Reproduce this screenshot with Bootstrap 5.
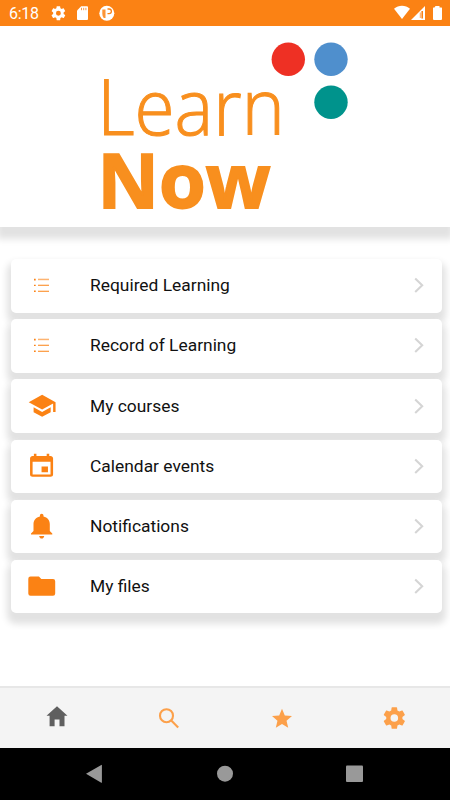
<!DOCTYPE html>
<html lang="en">
<head>
<meta charset="utf-8">
<meta name="viewport" content="width=device-width, initial-scale=1">
<title>Learn Now</title>
<link href="https://cdn.jsdelivr.net/npm/bootstrap@5.3.0/dist/css/bootstrap.min.css" rel="stylesheet">
<style>
  body { font-family: Roboto, "Liberation Sans", sans-serif; height: 800px; overflow: hidden; }
  svg { display: block; flex: none; }
  .status-bar { height: 26px; background: #fb8214; font-size: 16px; padding: 2px 8px 0 9px; }
  .status-bar .time { width: 42px; line-height: 24px; letter-spacing: -.3px; }
  .brand { height: 201px; box-shadow: 0 9px 7px 3px #e2e2e2; }
  .brand svg { overflow: visible; }
  .menu { padding: 32px 8px 0 11px; gap: 6.7px; }
  .menu-row { height: 53.5px; border-radius: 5px; box-shadow: 0 7px 7px 4px #e2e2e2; color: #111; font-size: 17.4px; padding: 0 16px 1px; text-decoration: none; }
  .menu-row:hover { color: #111; }
  .menu-row .label { margin-left: 33px; }
  .tabs { height: 62px; background: #f4f4f4; border-top: 2px solid #e7e7e7; padding: 0 0 1px 1px; }
  .tabs a { color: #fca04a; }
  .tabs a.current { color: #5f5f5f; }
  .nav-keys { height: 52px; background: #000; }
</style>
<script src="https://cdn.jsdelivr.net/npm/bootstrap@5.3.0/dist/js/bootstrap.bundle.min.js"></script>
</head>
<body class="d-flex flex-column bg-white">
<header class="status-bar d-flex align-items-center text-white flex-shrink-0 position-relative">
  <span class="time">6:18</span>
  <svg width="96" height="24" viewBox="51 2 96 24" fill="#fff">
    <path transform="translate(50 4.8) scale(.7)" d="M19.430 12.980c.04-.32.07-.64.07-.98s-.03-.66-.07-.98l2.110-1.650c.19-.15.24-.42.12-.64l-2-3.460c-.12-.22-.39-.3-.61-.22l-2.490 1c-.52-.4-1.080-.73-1.690-.98l-.38-2.650C14.460 2.180 14.250 2 14 2h-4c-.25 0-.46.18-.49.42l-.38 2.650c-.61.25-1.170.59-1.690.98l-2.490-1c-.23-.09-.49 0-.61.22l-2 3.460c-.13.22-.07.49.12.64l2.110 1.650c-.04.32-.07.65-.07.98s.03.66.07.98l-2.110 1.650c-.19.15-.24.42-.12.64l2 3.460c.12.22.39.3.61.22l2.490-1c.52.4 1.080.73 1.690.98l.38 2.650c.03.24.24.42.49.42h4c.25 0 .46-.18.49-.42l.38-2.650c.61-.25 1.170-.59 1.690-.98l2.490 1c.23.09.49 0 .61-.22l2-3.460c.12-.22.07-.49-.12-.64l-2.110-1.650zM12 15.500a3.500 3.500 0 1 1 0-7 3.500 3.500 0 0 1 0 7z"/>
    <path d="M81.200 6.200H87q1 0 1 1V19q0 1-1 1h-9q-1 0-1-1v-8.600z"/>
    <path d="M81.500 7.800v2.400M83.700 7.800v2.400M85.900 7.800v2.400" stroke="#fb8214" stroke-width=".8"/>
    <circle cx="106.800" cy="13.300" r="7.500"/>
    <path d="M102.300 9.500h3.200v8.500h-1.800q-1.400-2-1.400-4z" fill="#fb8214" opacity=".85"/>
    <path d="M107.500 9h1.600a2.300 2.300 0 0 1 0 4.600h-1.600" fill="none" stroke="#fb8214" stroke-width="1.300"/>
  </svg>
  <svg class="ms-auto" width="51" height="24" viewBox="391 2 51 24" fill="#fff">
    <path d="M394 8.800c4.500-4 11.500-4 16 0L402 19z"/>
    <path d="M425 6v14h-14z"/><path d="M422.200 11v7.500" stroke="#fb8214" stroke-width="1.600"/><path d="M420.300 12.500v5.500" stroke="#fb8214" stroke-width=".7"/>
    <path d="M435.500 6h4v1.500h2q.5 0 .5.500v11q0 1-1 1h-7q-1 0-1-1V8q0-.5.500-.5h1z"/>
  </svg>
</header>

<section class="brand flex-shrink-0">
  <svg width="450" height="200" viewBox="0 26 450 200" fill="#f88f1e">
    <text x="97.200" y="135" font-family="Open Sans" font-weight="300" font-size="76.500" textLength="187.500" lengthAdjust="spacingAndGlyphs" stroke="#f88f1e" stroke-width="1.100">Learn</text>
    <text x="97.500" y="208.300" font-family="Open Sans" font-weight="700" font-size="75.500" textLength="173" lengthAdjust="spacingAndGlyphs" stroke="#f88f1e" stroke-width="1.800">Now</text>
    <circle cx="288.300" cy="59.300" r="16.700" fill="#ee3024"/>
    <circle cx="331" cy="59.300" r="16.700" fill="#4f8fcd"/>
    <circle cx="331" cy="102.200" r="16.700" fill="#00938c"/>
  </svg>
</section>

<main class="menu d-flex flex-column flex-grow-1">
  <a href="#" class="menu-row d-flex align-items-center bg-white">
    <svg width="30" height="30" fill="#fb8214"><path d="M7 8.700h1.700v1.700H7zM7 14.700h1.700v1.400H7zM7 20.500h1.700v1.500H7zM11 14.800h11v1H11zM11 20.800h11v1H11z"/><path d="M11 8.700h11v1.500H11z" opacity=".6"/></svg>
    <span class="label">Required Learning</span>
    <svg class="ms-auto" width="14" height="20" fill="none" stroke="#d5d5d5" stroke-width="2.100"><path d="M3.200 3.500l7 6.800-7 6.800"/></svg>
  </a>
  <a href="#" class="menu-row d-flex align-items-center bg-white">
    <svg width="30" height="30" fill="#fb8214"><path d="M7 8.700h1.700v1.700H7zM7 14.700h1.700v1.400H7zM7 20.500h1.700v1.500H7zM11 14.800h11v1H11zM11 20.800h11v1H11z"/><path d="M11 8.700h11v1.500H11z" opacity=".6"/></svg>
    <span class="label">Record of Learning</span>
    <svg class="ms-auto" width="14" height="20" fill="none" stroke="#d5d5d5" stroke-width="2.100"><path d="M3.200 3.500l7 6.800-7 6.800"/></svg>
  </a>
  <a href="#" class="menu-row d-flex align-items-center bg-white">
    <svg width="30" height="30" fill="#fb8214"><path transform="translate(.5 .2) scale(1.220)" d="M5 13.180v4L12 21l7-3.820v-4L12 17l-7-3.820zM12 3L1 9l11 6 9-4.910V17h2V9L12 3z"/></svg>
    <span class="label">My courses</span>
    <svg class="ms-auto" width="14" height="20" fill="none" stroke="#d5d5d5" stroke-width="2.100"><path d="M3.200 3.500l7 6.800-7 6.800"/></svg>
  </a>
  <a href="#" class="menu-row d-flex align-items-center bg-white">
    <svg width="30" height="30" fill="#fb8214"><path transform="translate(-.8 1.600) scale(1.280 1.150)" d="M17 12h-5v5h5v-5zM16 1v2H8V1H6v2H5c-1.110 0-1.990.9-1.990 2L3 19c0 1.100.89 2 2 2h14c1.100 0 2-.9 2-2V5c0-1.100-.9-2-2-2h-1V1h-2zm3 18H5V8h14v11z"/></svg>
    <span class="label">Calendar events</span>
    <svg class="ms-auto" width="14" height="20" fill="none" stroke="#d5d5d5" stroke-width="2.100"><path d="M3.200 3.500l7 6.800-7 6.800"/></svg>
  </a>
  <a href="#" class="menu-row d-flex align-items-center bg-white">
    <svg width="30" height="30" fill="#fb8214"><path d="M14.700 2.700c1.100 0 1.800.8 1.800 2v.8c4 .8 6.300 3.800 6.300 7.800v6.600l2.500 2.600v1.100H4V22.500l2.500-2.600v-6.600c0-4 2.400-7 6.400-7.800v-.8c0-1.200.7-2 1.800-2zM12.200 25h5c-.1 1.500-1.100 2.600-2.500 2.600S12.300 26.500 12.200 25z"/></svg>
    <span class="label">Notifications</span>
    <svg class="ms-auto" width="14" height="20" fill="none" stroke="#d5d5d5" stroke-width="2.100"><path d="M3.200 3.500l7 6.800-7 6.800"/></svg>
  </a>
  <a href="#" class="menu-row d-flex align-items-center bg-white">
    <svg width="30" height="30" fill="#fb8214"><path d="M3.500 5.500h8.400l2.400 2.600H26q2.200 0 2.200 2.200v12.200q0 2.200-2.200 2.200H3.500q-2.200 0-2.200-2.200V7.700q0-2.200 2.200-2.200z"/></svg>
    <span class="label">My files</span>
    <svg class="ms-auto" width="14" height="20" fill="none" stroke="#d5d5d5" stroke-width="2.100"><path d="M3.200 3.500l7 6.800-7 6.800"/></svg>
  </a>
</main>

<nav class="tabs row g-0 flex-shrink-0">
  <a href="#" class="col current d-flex justify-content-center align-items-center" aria-label="Home">
    <svg width="24" height="24" fill="currentColor"><path d="M12 .2l10.500 9.600h-3V20.200h-5V13.500H9.600v6.700H4.600V9.800H1.500z"/></svg></a>
  <a href="#" class="col d-flex justify-content-center align-items-center" aria-label="Search">
    <svg width="24" height="24" fill="none" stroke="currentColor" stroke-width="2.100"><circle cx="9.500" cy="9.700" r="6.500"/><path d="M14 14.200l7.200 7.200"/></svg></a>
  <a href="#" class="col d-flex justify-content-center align-items-center" aria-label="Favourites">
    <svg width="24" height="24" viewBox="0 -.8 24 24" fill="currentColor"><path d="M12 17.270L18.180 21l-1.640-7.030L22 9.240l-7.190-.61L12 2 9.190 8.630 2 9.240l5.460 4.730L5.820 21z"/></svg></a>
  <a href="#" class="col d-flex justify-content-center align-items-center" aria-label="Settings">
    <svg width="26" height="26" viewBox="-.3 0 24 24" fill="currentColor"><path d="M19.430 12.980c.04-.32.07-.64.07-.98s-.03-.66-.07-.98l2.110-1.650c.19-.15.24-.42.12-.64l-2-3.460c-.12-.22-.39-.3-.61-.22l-2.490 1c-.52-.4-1.080-.73-1.690-.98l-.38-2.650C14.460 2.180 14.250 2 14 2h-4c-.25 0-.46.18-.49.42l-.38 2.650c-.61.25-1.170.59-1.690.98l-2.490-1c-.23-.09-.49 0-.61.22l-2 3.460c-.13.22-.07.49.12.64l2.110 1.650c-.04.32-.07.65-.07.98s.03.66.07.98l-2.110 1.650c-.19.15-.24.42-.12.64l2 3.460c.12.22.39.3.61.22l2.490-1c.52.4 1.080.73 1.690.98l.38 2.650c.03.24.24.42.49.42h4c.25 0 .46-.18.49-.42l.38-2.650c.61-.25 1.170-.59 1.690-.98l2.490 1c.23.09.49 0 .61-.22l2-3.460c.12-.22.07-.49-.12-.64l-2.110-1.650zM12 15.500a3.500 3.500 0 1 1 0-7 3.500 3.500 0 0 1 0 7z"/></svg></a>
</nav>
<footer class="nav-keys flex-shrink-0">
  <svg width="450" height="52" viewBox="0 748 450 52" fill="#999">
    <path d="M86 773.700l15.300-8.800q.6-.3.600.4v17q0 .8-.6.400z"/>
    <circle cx="225" cy="773.700" r="8"/>
    <rect x="346" y="765.400" width="17" height="16.600" rx="1"/>
  </svg>
</footer>
</body>
</html>
